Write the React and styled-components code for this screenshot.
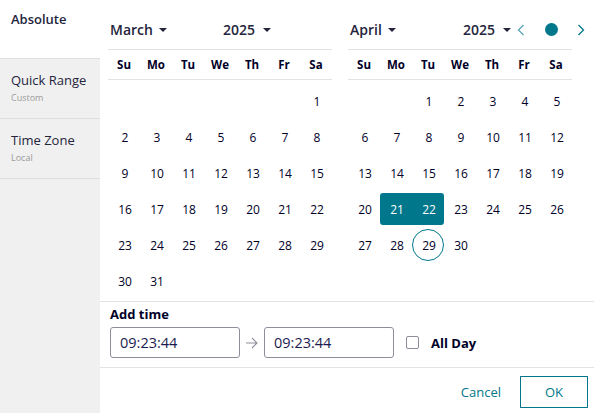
import React from 'react';
import styled, { createGlobalStyle, css } from 'styled-components';

const ink = '#000028';
const teal = '#00778b';
const line = '#e3e3e3';

const GlobalStyle = createGlobalStyle`
  html, body {
    margin: 0;
    padding: 0;
    background: #ffffff;
  }
  body {
    font-family: "Open Sans", "Noto Sans", sans-serif;
    color: ${ink};
  }
  * {
    box-sizing: border-box;
  }
`;

const Shell = styled.div`
  display: flex;
  width: 594px;
  height: 413px;
  overflow: hidden;
`;

const Sidebar = styled.nav`
  width: 100px;
  flex-shrink: 0;
  background: #f0f0f0;
  display: flex;
  flex-direction: column;
`;

const SideItem = styled.div`
  padding: ${(p) => (p.$active ? '10px 11px' : '12px 11px')};
  border-bottom: 1px solid #dedede;
  background: ${(p) => (p.$active ? '#ffffff' : 'transparent')};
  height: ${(p) => (p.$active ? '59px' : '60px')};
`;

const SideTitle = styled.div`
  font-size: 13px;
  line-height: 18px;
  font-weight: ${(p) => (p.$active ? 600 : 400)};
  color: #24243c;
`;

const SideSub = styled.div`
  font-size: 9px;
  line-height: 14px;
  margin-top: 2px;
  color: #9b9b9b;
`;

const Main = styled.main`
  flex: 1;
  display: flex;
  flex-direction: column;
`;

const Calendars = styled.div`
  display: flex;
  gap: 16px;
  padding: 0 8px;
`;

const Calendar = styled.div`
  width: 224px;
`;

const Header = styled.div`
  height: 50px;
  padding-top: 10px;
  display: flex;
  align-items: center;
  border-bottom: 1px solid ${line};
`;

const Dropdown = styled.div`
  display: flex;
  align-items: center;
  gap: ${(p) => p.$gap}px;
  width: ${(p) => (p.$width ? `${p.$width}px` : 'auto')};
  padding-left: 2px;
  font-size: 14px;
  font-weight: 600;
  color: #24243c;
  flex-shrink: 0;
`;

const Caret = styled.span`
  width: 0;
  height: 0;
  border-left: 4px solid transparent;
  border-right: 4px solid transparent;
  border-top: 4px solid #24243c;
`;

const Nav = styled.div`
  display: flex;
  align-items: center;
  gap: 14px;
  margin-left: 2px;
  flex-shrink: 0;
`;

const NavButton = styled.span`
  width: 16px;
  height: 20px;
  display: flex;
  align-items: center;
  justify-content: center;
`;

const Dot = styled.span`
  width: 13px;
  height: 13px;
  border-radius: 50%;
  background: ${teal};
`;

const Weekdays = styled.div`
  display: grid;
  grid-template-columns: repeat(7, 32px);
  height: 30px;
  align-items: center;
  border-bottom: 1px solid ${line};
`;

const Weekday = styled.span`
  text-align: center;
  font-size: 11.5px;
  font-weight: 700;
  color: ${ink};
`;

const Days = styled.div`
  display: grid;
  grid-template-columns: repeat(7, 32px);
  grid-auto-rows: 32px;
  row-gap: 4px;
  padding: 5px 0 4px;
`;

const Day = styled.span`
  display: flex;
  align-items: center;
  justify-content: center;
  padding-left: 2px;
  font-size: 12px;
  color: ${ink};
  ${(p) =>
    p.$selected &&
    css`
      background: ${teal};
      color: #ffffff;
      border-radius: ${p.$edge === 'start' ? '3px 0 0 3px' : p.$edge === 'end' ? '0 3px 3px 0' : '0'};
    `}
  ${(p) =>
    p.$today &&
    css`
      border: 1px solid ${teal};
      border-radius: 50%;
    `}
`;

const TimeSection = styled.section`
  border-top: 1px solid ${line};
  border-bottom: 1px solid ${line};
  padding: 3px 10px 9px;
`;

const Label = styled.div`
  font-size: 13px;
  font-weight: 700;
  line-height: 18px;
  margin-bottom: 4px;
`;

const TimeRow = styled.div`
  display: flex;
  align-items: center;
`;

const TimeInput = styled.div`
  width: 130px;
  height: 31px;
  border: 1px solid #8d8d9c;
  border-radius: 3px;
  padding: 0 9px;
  display: flex;
  align-items: center;
  font-size: 14.5px;
  color: #1b1b50;
`;

const Arrow = styled.span`
  width: 24px;
  display: flex;
  justify-content: center;
`;

const Check = styled.label`
  display: flex;
  align-items: center;
  gap: 12px;
  margin-left: 12px;
  font-size: 13px;
  font-weight: 700;
`;

const Box = styled.span`
  width: 13px;
  height: 13px;
  border: 1px solid #8d8d9c;
  border-radius: 2px;
`;

const Footer = styled.footer`
  display: flex;
  justify-content: flex-end;
  align-items: center;
  gap: 19px;
  padding: 8px 6px 0 0;
`;

const TextButton = styled.button`
  background: none;
  border: none;
  padding: 0;
  font-family: inherit;
  font-size: 13px;
  color: ${teal};
`;

const OutlineButton = styled.button`
  width: 68px;
  height: 32px;
  background: #ffffff;
  border: 1px solid ${teal};
  font-family: inherit;
  font-size: 13px;
  color: ${teal};
`;

const WEEK = ['Su', 'Mo', 'Tu', 'We', 'Th', 'Fr', 'Sa'];

const months = [
  { name: 'March', offset: 6, length: 31 },
  { name: 'April', offset: 2, length: 30 }
];

const Chevron = ({ dir, color }) => (
  <svg width="8" height="12" viewBox="0 0 8 12">
    <polyline
      points={dir === 'left' ? '6.5,1 1.5,6 6.5,11' : '1.5,1 6.5,6 1.5,11'}
      fill="none"
      stroke={color}
      strokeWidth="1.3"
    />
  </svg>
);

const MonthView = ({ month, withNav }) => {
  const cells = [];
  for (let i = 0; i < month.offset; i++) cells.push(<span key={`e${i}`} />);
  for (let d = 1; d <= month.length; d++) {
    const isApril = month.name === 'April';
    const selected = isApril && (d === 21 || d === 22);
    cells.push(
      <Day
        key={d}
        $selected={selected}
        $edge={d === 21 ? 'start' : d === 22 ? 'end' : null}
        $today={isApril && d === 29}
      >
        {d}
      </Day>
    );
  }

  return (
    <Calendar>
      <Header>
        <Dropdown $gap={6} $width={113}>
          {month.name}
          <Caret />
        </Dropdown>
        <Dropdown $gap={8}>
          2025
          <Caret />
        </Dropdown>
        {withNav && (
          <Nav>
            <NavButton>
              <Chevron dir="left" color="#5aa6b6" />
            </NavButton>
            <NavButton>
              <Dot />
            </NavButton>
            <NavButton>
              <Chevron dir="right" color={teal} />
            </NavButton>
          </Nav>
        )}
      </Header>
      <Weekdays>
        {WEEK.map((w) => (
          <Weekday key={w}>{w}</Weekday>
        ))}
      </Weekdays>
      <Days>{cells}</Days>
    </Calendar>
  );
};

const App = () => (
  <Shell>
    <GlobalStyle />
    <Sidebar>
      <SideItem $active>
        <SideTitle $active>Absolute</SideTitle>
      </SideItem>
      <SideItem>
        <SideTitle>Quick Range</SideTitle>
        <SideSub>Custom</SideSub>
      </SideItem>
      <SideItem>
        <SideTitle>Time Zone</SideTitle>
        <SideSub>Local</SideSub>
      </SideItem>
    </Sidebar>
    <Main>
      <Calendars>
        <MonthView month={months[0]} />
        <MonthView month={months[1]} withNav />
      </Calendars>
      <TimeSection>
        <Label>Add time</Label>
        <TimeRow>
          <TimeInput>09:23:44</TimeInput>
          <Arrow>
            <svg width="14" height="12" viewBox="0 0 14 12">
              <path d="M1 6h11M7 1l5 5-5 5" fill="none" stroke="#8d8d9c" strokeWidth="1.1" />
            </svg>
          </Arrow>
          <TimeInput>09:23:44</TimeInput>
          <Check>
            <Box />
            All Day
          </Check>
        </TimeRow>
      </TimeSection>
      <Footer>
        <TextButton>Cancel</TextButton>
        <OutlineButton>OK</OutlineButton>
      </Footer>
    </Main>
  </Shell>
);

export default App;
